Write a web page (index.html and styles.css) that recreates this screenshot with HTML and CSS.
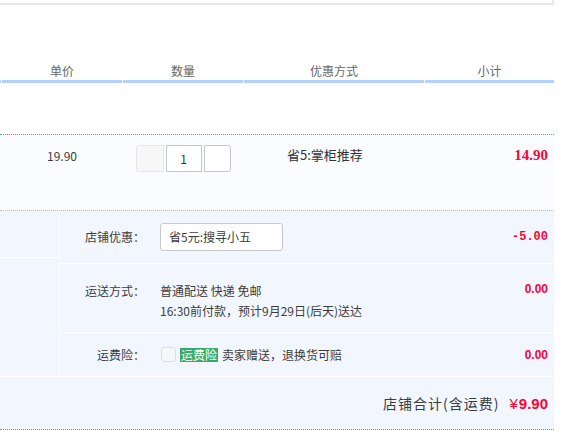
FILE: index.html
```html
<!DOCTYPE html>
<html lang="zh-CN">
<head>
<meta charset="utf-8">
<title>订单</title>
<link rel="stylesheet" href="styles.css">
</head>
<body>
<div class="page">
  <div class="prev-box"></div>

  <div class="thead">
    <div class="th th-stub"></div>
    <div class="th th-price">单价</div>
    <div class="th th-qty">数量</div>
    <div class="th th-promo">优惠方式</div>
    <div class="th th-sum">小计</div>
  </div>

  <div class="item">
    <div class="cell c-stub"></div>
    <div class="cell c-price">19.90</div>
    <div class="cell c-qty">
      <div class="qty">
        <span class="qbtn minus"></span>
        <span class="qinput">1</span>
        <span class="qbtn plus"></span>
      </div>
    </div>
    <div class="cell c-promo">省5:掌柜推荐</div>
    <div class="cell c-sum"><span class="sum-big">14.90</span></div>
  </div>

  <div class="shop">
    <div class="shop-main">
      <div class="shop-left">
        <div class="sl-top"></div>
      </div>
      <div class="shop-rows">
        <div class="srow r-coupon">
          <div class="slabel">店铺优惠：</div>
          <div class="scontent"><div class="select">省5元:搜寻小五</div></div>
          <div class="samount amt-minus">-5.00</div>
        </div>
        <div class="srow r-ship">
          <div class="slabel">运送方式：</div>
          <div class="scontent">
            <div class="line">普通配送 快递 免邮</div>
            <div class="line">16:30前付款，预计9月29日(后天)送达</div>
          </div>
          <div class="samount">0.00</div>
        </div>
        <div class="srow r-ins">
          <div class="slabel">运费险：</div>
          <div class="scontent">
            <span class="check"></span><span class="badge">运费险</span><span class="ins-text">卖家赠送，退换货可赔</span>
          </div>
          <div class="samount">0.00</div>
        </div>
      </div>
    </div>
    <div class="shop-total">
      <span class="total-label">店铺合计(含运费)</span>
      <span class="total-price"><span class="yen">¥</span>9.90</span>
    </div>
  </div>
</div>
</body>
</html>
```

FILE: styles.css
```css
html, body {
  margin: 0;
  padding: 0;
  background: #ffffff;
}

body {
  font-family: "Noto Sans CJK SC", "Liberation Sans", sans-serif;
  font-size: 12px;
  color: #3c3c3c;
}

.page {
  width: 554px;
}

.prev-box {
  width: 552px;
  height: 3px;
  border-right: 2px solid #e8e8e8;
  border-bottom: 2px solid #e8e8e8;
}

/* table header */
.thead {
  display: flex;
  gap: 1px;
  margin-top: 57px;
}

.th {
  height: 18px;
  line-height: 18px;
  text-align: center;
  color: #666666;
  border-bottom: 3px solid #b2d1ff;
}

.th-stub, .c-stub { width: 1px; }
.th-price, .c-price { width: 120px; }
.th-qty, .c-qty { width: 120px; }
.th-promo, .c-promo { width: 180px; }
.th-sum, .c-sum { width: 129px; }

/* item row */
.item {
  display: flex;
  gap: 1px;
  margin-top: 51px;
  height: 75px;
  background: #fbfcff;
  border-top: 1px dotted #4d94ff;
  border-bottom: 1px dotted #bbbbbb;
}

.cell {
  line-height: 18px;
}

.c-price {
  text-align: center;
  padding-top: 12px;
}

.c-qty {
  display: flex;
  justify-content: center;
  padding-top: 10px;
}

.qty {
  display: flex;
  gap: 2px;
  height: 27px;
}

.qbtn, .qinput {
  box-sizing: border-box;
  height: 27px;
  display: block;
}

.minus {
  width: 28px;
  background: #f7f7f7;
  border: 1px solid #e6e6e6;
  border-radius: 3px 0 0 3px;
}

.qinput {
  width: 36px;
  background: #ffffff;
  border: 1px solid #c7c8cf;
  text-align: center;
  line-height: 25px;
  color: #333333;
}

.plus {
  width: 27px;
  background: #ffffff;
  border: 1px solid #c7c8cf;
  border-radius: 0 3px 3px 0;
}

.c-promo {
  padding-top: 11px;
  padding-left: 43px;
  box-sizing: border-box;
  font-size: 13px;
  color: #333333;
}

.c-sum {
  text-align: right;
  padding-top: 11px;
  padding-right: 6px;
  box-sizing: border-box;
}

.sum-big {
  font-family: "Liberation Serif", serif;
  font-weight: bold;
  font-size: 15px;
  color: #ff0036;
}

/* shop section */
.shop {
  background: #f2f7ff;
  border-bottom: 1px dotted #4d94ff;
}

.shop-main {
  display: flex;
  border-bottom: 1px solid #ffffff;
}

.shop-left {
  width: 59px;
  border-right: 1px solid #ffffff;
}

.sl-top {
  height: 46px;
  border-bottom: 1px solid #ffffff;
}

.shop-rows {
  flex: 1;
}

.srow {
  display: flex;
  line-height: 20px;
}

.r-coupon {
  height: 52px;
  align-items: center;
  border-bottom: 1px solid #ffffff;
}

.r-ship {
  height: 69px;
  box-sizing: border-box;
  padding-top: 17px;
  align-items: flex-start;
  border-bottom: 1px solid #ffffff;
}

.r-ins {
  height: 43px;
  align-items: center;
}

.slabel {
  width: 85px;
  text-align: right;
  flex: none;
}

.scontent {
  flex: 1;
  padding-left: 15px;
  display: flex;
  flex-direction: column;
}

.r-ins .scontent {
  flex-direction: row;
  align-items: center;
}

.line {
  height: 20px;
}

.select {
  box-sizing: border-box;
  width: 123px;
  height: 28px;
  line-height: 26px;
  padding-left: 8px;
  background: #ffffff;
  border: 1px solid #c9c9c9;
  border-radius: 3px;
}

.check {
  box-sizing: border-box;
  width: 15px;
  height: 15px;
  border: 1px solid #dcdfe6;
  border-radius: 3px;
  background: #f5f7fa;
  margin-left: 1px;
  margin-right: 4px;
}

.badge {
  background: #39a96b;
  color: #ffffff;
  height: 14px;
  line-height: 14px;
  padding: 0 1px;
  margin-right: 4px;
}

.samount {
  padding-right: 6px;
  font-family: "Liberation Sans", sans-serif;
  font-weight: bold;
  font-size: 12px;
  color: #ff0036;
  text-align: right;
}

.r-ship .samount {
  line-height: 17px;
}

.amt-minus {
  font-family: "Liberation Mono", monospace;
  font-size: 12px;
}

.shop-total {
  height: 52px;
  display: flex;
  justify-content: flex-end;
  align-items: center;
  padding-right: 6px;
  font-size: 14px;
  color: #3c3c3c;
}

.total-label {
  margin-right: 10px;
  letter-spacing: 1px;
}

.total-price {
  font-family: "Liberation Sans", sans-serif;
  font-weight: bold;
  font-size: 15px;
  color: #ff0036;
}

.yen {
  font-weight: normal;
  margin-right: 1px;
}
```
